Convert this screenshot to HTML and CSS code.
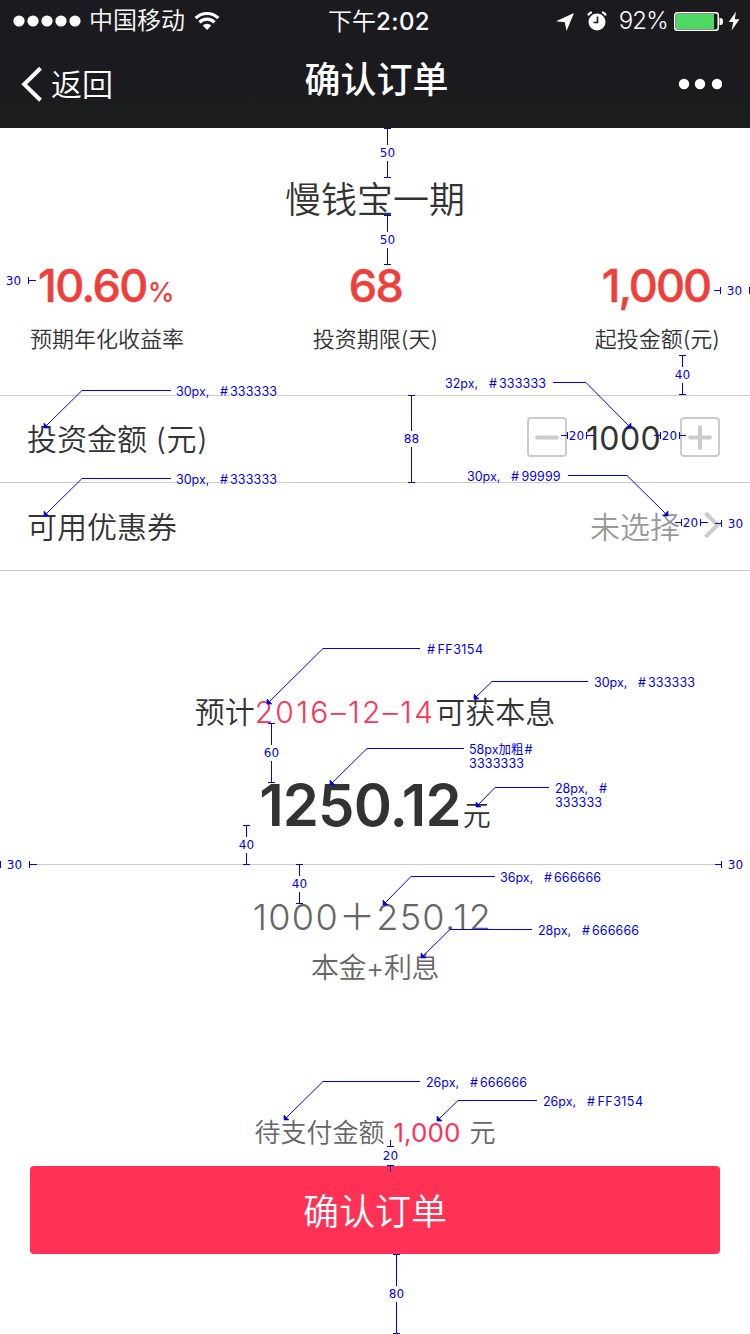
FILE: index.html
```html
<!DOCTYPE html>
<html lang="zh-CN">
<head>
<meta charset="utf-8">
<title>确认订单</title>
<link rel="stylesheet" href="styles.css">
</head>
<body>
<div class="screen">
  <header class="header">
    <div class="status">
      <div class="status-left">
        <svg class="signal" width="68" height="12" viewBox="0 0 68 12"><circle cx="6" cy="6" r="5.6"/><circle cx="20" cy="6" r="5.6"/><circle cx="34" cy="6" r="5.6"/><circle cx="48" cy="6" r="5.6"/><circle cx="62" cy="6" r="5.6"/></svg>
        <span class="carrier">中国移动</span>
        <svg class="wifi" width="26" height="20" viewBox="0 0 26 20"><path class="arc" d="M1.6 7.2a16.2 16.2 0 0 1 22.8 0M5.5 11.3a10.6 10.6 0 0 1 15 0"/><path d="M8.7 14.4a6.2 6.2 0 0 1 8.6 0L13 19z"/></svg>
      </div>
      <div class="time">下午<span class="time-digits">2:02</span></div>
      <div class="status-right">
        <svg width="20" height="20" viewBox="0 0 20 20"><path d="M19 2 11.5 20 9.8 11.2 1 10.2z"/></svg>
        <svg class="alarm" width="20" height="20" viewBox="0 0 20 20"><circle cx="10" cy="11" r="8.5"/><path class="bell" d="M1.2 4.5Q2 1.8 5 1.2M18.8 4.5Q18 1.8 15 1.2"/><path class="hands" d="M10.5 5.5v6H6.5"/></svg>
        <span class="percent">92%</span>
        <svg class="battery" width="50" height="20" viewBox="0 0 50 20"><rect class="shell" x=".75" y="1.75" width="43.5" height="17.5" rx="2.5"/><rect class="charge" x="2" y="3" width="38" height="15"/><path d="M45.5 7h1.2q2.3 0 2.3 3.5t-2.3 3.5h-1.2z"/></svg>
        <svg class="bolt" width="12" height="20" viewBox="0 0 12 20"><path d="M8 .5 .8 11h4.5L3.5 19.5 11.5 8.2H6.8z"/></svg>
      </div>
    </div>
    <nav class="nav">
      <div class="back"><svg width="22" height="36" viewBox="0 0 22 36"><path d="M19.5 2.2 3.2 18.2l16.3 16"/></svg><span class="back-label">返回</span></div>
      <h1 class="nav-title">确认订单</h1>
      <svg class="more" width="44" height="12" viewBox="0 0 44 12"><circle cx="6" cy="6" r="5.2"/><circle cx="22" cy="6" r="5.2"/><circle cx="39" cy="6" r="5.2"/></svg>
    </nav>
  </header>

  <section class="product">
    <h2 class="product-name">慢钱宝一期</h2>
    <div class="stats">
      <div class="stat stat-start"><div class="value">10.60<span class="unit">%</span></div><div class="caption">预期年化收益率</div></div>
      <div class="stat stat-mid"><div class="value">68</div><div class="caption">投资期限(天)</div></div>
      <div class="stat stat-end"><div class="value">1,000</div><div class="caption">起投金额(元)</div></div>
    </div>
  </section>

  <section class="rows">
    <div class="row">
      <span>投资金额 <span class="paren">(元)</span></span>
      <div class="stepper">
        <button class="step"><svg width="36" height="36" viewBox="0 0 36 36"><path d="M8 18.5h20"/></svg></button>
        <span class="amount">1000</span>
        <button class="step"><svg width="36" height="36" viewBox="0 0 36 36"><path d="M8 18.5h20M18 8v21"/></svg></button>
      </div>
    </div>
    <div class="row">
      <span>可用优惠券</span>
      <div class="coupon"><span>未选择</span><svg width="16" height="28" viewBox="0 0 16 28"><path d="M1.5 2 13.5 14 1.5 26"/></svg></div>
    </div>
  </section>

  <section class="summary">
    <p class="forecast">预计<span class="date">2016–12–14</span>可获本息</p>
    <p class="total"><span class="sum">1250.12</span><span class="yuan">元</span></p>
    <p class="formula">1000<span class="plus">＋</span>250.12</p>
    <p class="formula-note">本金+利息</p>
  </section>

  <footer class="footer">
    <p class="due">待支付金额<span class="due-sum">1,000</span>元</p>
    <button class="confirm">确认订单</button>
  </footer>

  <svg class="notes" width="750" height="1334" viewBox="0 0 750 1334">
    <path class="dim" d="M384 128.500h7M387.500 128v17M387.500 161v17M384 177.500h7
      M384 215.500h7M387.500 215v17M387.500 248v17M384 264.500h7
      M679 355.500h7M682.500 355v12M682.500 383v12M679 394.500h7
      M408 395.500h7M411.500 395v36M411.500 447v36M408 482.500h7
      M268 723.500h7M271.500 723v22M271.500 761v22M268 782.500h7
      M243 825.500h7M246.500 825v12M246.500 853v12M243 864.500h7
      M296 864.500h7M299.500 864v12M299.500 892v12M296 903.500h7
      M387 1146.500h7M390.500 1140v7M387 1165.500h7M390.500 1165v7
      M393 1254.500h7M396.500 1254v32M396.500 1302v32M393 1333.500h7
      M28.500 277v7M28 280.500h8
      M714 290.500h7M720.500 287v7M749.500 287v7
      M.5 861v7M29.500 861v7M29 864.500h8M715 864.500h7M721.500 861v7
      M561 435.500h7M567.500 432v7M586.500 432v7M586 435.500h8
      M654 435.500h7M660.500 432v7M679.500 432v7M679 435.500h7
      M675 522.500h7M681.500 519v7M700.500 519v7M700 522.500h8M715 523.500h7M721.500 520v7"/>
    <path class="leader" d="M171 390.500H82L44 428M171 478.500H82L44 516M553 382.500h33L631 428M568 475.500h59L668 516M420 648.500h-97L267 704M588 681.500h-96L474 699M464 748.500h-97L330 785M549 787.500h-54L476 807M495 876.500h-84L383 905M532 929.500h-82L421 958M420 1081.500h-97L284 1120M537 1100.500h-79L437 1121"/>
    <path class="tip" d="M44 423v5h5zM44 511v5h5zM631 423v5h-5zM668 511v5h-5zM267 699v5h5zM474 694v5h5zM330 780v5h5zM476 802v5h5zM383 900v5h5zM421 953v5h5zM284 1115v5h5zM437 1116v5h5z"/>
    <g class="size">
      <text x="387.5" y="157">50</text><text x="387.5" y="244">50</text><text x="682.5" y="379">40</text>
      <text x="411.5" y="443">88</text><text x="271.5" y="757">60</text><text x="246.5" y="849">40</text>
      <text x="299.5" y="888">40</text><text x="390.5" y="1160">20</text><text x="396.5" y="1298">80</text>
      <text x="13.5" y="285">30</text><text x="734.5" y="295">30</text><text x="14.5" y="869">30</text><text x="735.5" y="869">30</text>
      <text x="576.5" y="440">20</text><text x="669.5" y="440">20</text><text x="690.5" y="527">20</text><text x="735.5" y="528">30</text>
    </g>
    <g class="spec">
      <text y="396"><tspan x="176">30px,</tspan><tspan x="220">#</tspan><tspan x="230" textLength="47">333333</tspan></text>
      <text y="484"><tspan x="176">30px,</tspan><tspan x="220">#</tspan><tspan x="230" textLength="47">333333</tspan></text>
      <text y="388"><tspan x="445">32px,</tspan><tspan x="489">#</tspan><tspan x="499" textLength="47">333333</tspan></text>
      <text y="481"><tspan x="467">30px,</tspan><tspan x="511">#</tspan><tspan x="521.5" textLength="39">99999</tspan></text>
      <text y="654"><tspan x="427">#</tspan><tspan x="437.5" textLength="45.5">FF3154</tspan></text>
      <text y="687"><tspan x="594">30px,</tspan><tspan x="638">#</tspan><tspan x="648" textLength="47">333333</tspan></text>
      <text y="754"><tspan x="469">58px</tspan><tspan x="498.5">加粗</tspan><tspan x="524.5">#</tspan></text>
      <text y="768"><tspan x="469" textLength="55">3333333</tspan></text>
      <text y="793"><tspan x="555">28px,</tspan><tspan x="599">#</tspan></text>
      <text y="807"><tspan x="555" textLength="47">333333</tspan></text>
      <text y="882"><tspan x="500">36px,</tspan><tspan x="544">#</tspan><tspan x="554" textLength="47">666666</tspan></text>
      <text y="935"><tspan x="538">28px,</tspan><tspan x="582">#</tspan><tspan x="592" textLength="47">666666</tspan></text>
      <text y="1087"><tspan x="426">26px,</tspan><tspan x="470">#</tspan><tspan x="480" textLength="47">666666</tspan></text>
      <text y="1106"><tspan x="543">26px,</tspan><tspan x="587">#</tspan><tspan x="597.5" textLength="45.5">FF3154</tspan></text>
    </g>
  </svg>
</div>
</body>
</html>
```
FILE: styles.css
```css
* { box-sizing: border-box; }
body { margin: 0; background: #fff; color: #333; font-family: Inter, "Noto Sans CJK SC", sans-serif; font-weight: 350; }
h1, h2, p { margin: 0; font-weight: inherit; }
button { padding: 0; margin: 0; border: 0; background: none; font: inherit; display: block; }
svg { display: block; flex: none; }
.screen { position: relative; width: 750px; height: 1334px; overflow: hidden; }

.header { height: 128px; background: linear-gradient(#1b1a1f 60%, #1c1e1e); color: #fff; }
.header svg { fill: #fff; }
.status, .nav { display: grid; grid-template-columns: 1fr auto 1fr; }
.status { height: 40px; line-height: 42px; font-size: 24px; padding: 0 10px 0 12px; align-items: center; }
.status-left, .status-right { display: flex; align-items: center; height: 41px; }
.status-right { justify-content: flex-end; }
.signal { margin-left: 1px; }
.carrier { margin: 0 9px 0 8px; }
.wifi .arc { fill: none; stroke: #fff; stroke-width: 3.2; }
.time { padding-left: 6px; height: 40px; }
.time-digits { font-weight: 500; letter-spacing: .4px; }
.alarm { margin-left: 12px; }
.alarm .bell { fill: none; stroke: #fff; stroke-width: 2; }
.alarm .hands { fill: none; stroke: #1b1a1f; stroke-width: 1.6; }
.percent { margin: 0 6px 0 12px; letter-spacing: -.8px; }
.battery .shell { fill: none; stroke: #fff; stroke-width: 1.5; }
.battery .charge { fill: #4cd964; }
.bolt { margin-left: 4px; }
.nav { grid-template-columns: 1fr 154px 1fr; height: 88px; padding: 0 28px 0 21px; align-items: center; }
.back { display: flex; align-items: center; gap: 8px; font-size: 31px; }
.back-label { padding-bottom: 4px; }
.back path { fill: none; stroke: #fff; stroke-width: 4; }
.nav-title { font-size: 36px; font-weight: 500; line-height: 80px; height: 88px; padding-left: 10px; }
.more { justify-self: end; }

.product { height: 267px; padding: 45px 30px 0; }
.product-name { font-size: 36px; line-height: 54px; text-align: center; }
.stats { display: grid; grid-template-columns: 1fr auto 1fr; margin-top: 30px; }
.value { color: #ee3f3c; font-size: 45px; line-height: 58px; height: 66px; font-weight: 500; white-space: nowrap; letter-spacing: -1.5px; -webkit-text-stroke: .5px #ee3f3c; }
.unit { font-size: 27px; font-weight: 500; margin-left: 1px; letter-spacing: 0; -webkit-text-stroke: 0; }
.stat-start .value { padding-left: 8px; }
.stat-mid { text-align: center; padding-left: 1px; }
.stat-end { justify-self: end; }
.stat-end .value { text-align: right; padding-right: 10px; letter-spacing: -2px; }
.caption { font-size: 22px; line-height: 32px; }

.row { height: 88px; border-top: 1px solid #ccc; padding: 0 30px 4px 27px; display: flex; justify-content: space-between; align-items: center; font-size: 30px; }
.row:first-child { height: 87px; }
.row:last-child { height: 89px; border-bottom: 1px solid #ccc; }
.paren { letter-spacing: .7px; }
.stepper { display: flex; align-items: center; }
.step { width: 40px; height: 40px; border: 2px solid #ccc; border-radius: 4px; }
.step path { stroke: #ccc; stroke-width: 4; stroke-linecap: round; }
.amount { width: 113px; text-align: center; font-size: 32px; font-weight: 400; letter-spacing: .4px; padding-top: 2px; }
.coupon { display: flex; align-items: center; gap: 24px; color: #999; }
.coupon path { fill: none; stroke: #ccc; stroke-width: 4; }

.summary { margin: 0 30px; text-align: center; padding-top: 119px; }
.forecast { font-size: 30px; line-height: 44px; }
.date { color: #ff3154; letter-spacing: 2.3px; }
.total { height: 131px; padding-top: 36px; line-height: 70px; border-bottom: 1px solid #ccc; }
.sum { font-size: 58px; font-weight: 600; letter-spacing: -.9px; }
.yuan { font-size: 28px; margin-left: 2px; }
.formula { color: #666; font-size: 36px; line-height: 50px; margin-top: 27px; letter-spacing: 1.3px; padding-right: 5px; }
.formula-note { color: #666; font-size: 28px; line-height: 40px; margin-top: 6px; letter-spacing: -.5px; }

.footer { margin: 124px 30px 0; text-align: center; }
.due { color: #666; font-size: 26px; line-height: 42px; height: 54px; }
.due-sum { color: #ff3154; margin: 0 9px; font-weight: 400; letter-spacing: .1px; }
.confirm { width: 100%; height: 88px; border-radius: 4px; background: #ff3154; color: #fff; font-size: 36px; padding-bottom: 3px; }

.notes { position: absolute; left: 0; top: 0; }
.dim, .leader { fill: none; stroke: #0000f0; stroke-width: 1; }
.tip { fill: #0000f0; stroke: #0000f0; stroke-width: .6; }
.size, .spec { fill: #0000f0; font-weight: 400; stroke: #fff; stroke-width: 1.5px; paint-order: stroke; }
.size { font-family: "DejaVu Sans", sans-serif; font-size: 12px; text-anchor: middle; }
.spec { font-size: 12.5px; }
```
